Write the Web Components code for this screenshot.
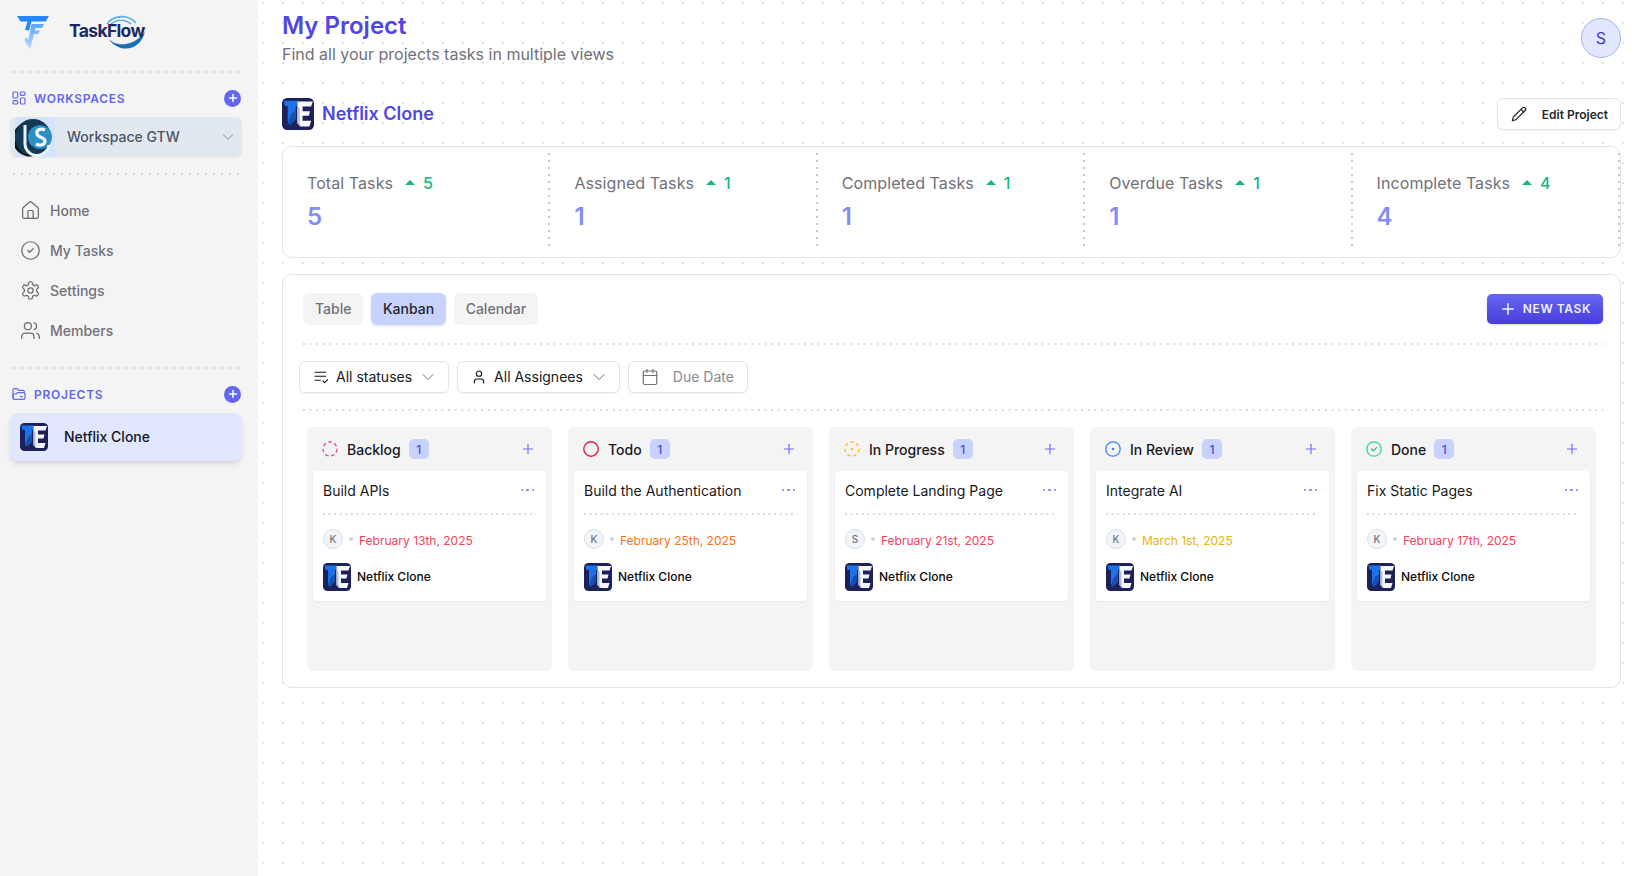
<!DOCTYPE html>
<html lang="en">
<head>
<meta charset="utf-8">
<title>TaskFlow</title>
<style>
  html, body { margin: 0; height: 100%; }
  body { font-family: Inter, "Liberation Sans", sans-serif; background: #fff; color: #111827; overflow: hidden; }
</style>
</head>
<body>
<tf-app>
  <tf-sidebar slot="side"></tf-sidebar>
  <tf-main slot="main"></tf-main>
</tf-app>

<script>
// Iconos partilhados (traço 24x24)
const ICONS = {
  home: '<path d="M15 21v-8a1 1 0 0 0-1-1h-4a1 1 0 0 0-1 1v8"/><path d="M3 10a2 2 0 0 1 .709-1.528l7-5.999a2 2 0 0 1 2.582 0l7 5.999A2 2 0 0 1 21 10v9a2 2 0 0 1-2 2H5a2 2 0 0 1-2-2z"/>',
  check: '<circle cx="12" cy="12" r="10"/><path d="m9 12 2 2 4-4"/>',
  settings: '<path d="M12.22 2h-.44a2 2 0 0 0-2 2v.18a2 2 0 0 1-1 1.73l-.43.25a2 2 0 0 1-2 0l-.15-.08a2 2 0 0 0-2.73.73l-.22.38a2 2 0 0 0 .73 2.73l.15.1a2 2 0 0 1 1 1.72v.51a2 2 0 0 1-1 1.74l-.15.09a2 2 0 0 0-.73 2.73l.22.38a2 2 0 0 0 2.73.73l.15-.08a2 2 0 0 1 2 0l.43.25a2 2 0 0 1 1 1.73V20a2 2 0 0 0 2 2h.44a2 2 0 0 0 2-2v-.18a2 2 0 0 1 1-1.73l.43-.25a2 2 0 0 1 2 0l.15.08a2 2 0 0 0 2.73-.73l.22-.39a2 2 0 0 0-.73-2.73l-.15-.08a2 2 0 0 1-1-1.74v-.5a2 2 0 0 1 1-1.74l.15-.09a2 2 0 0 0 .73-2.73l-.22-.38a2 2 0 0 0-2.73-.73l-.15.08a2 2 0 0 1-2 0l-.43-.25a2 2 0 0 1-1-1.73V4a2 2 0 0 0-2-2z"/><circle cx="12" cy="12" r="3"/>',
  users: '<path d="M16 21v-2a4 4 0 0 0-4-4H6a4 4 0 0 0-4 4v2"/><circle cx="9" cy="7" r="4"/><path d="M22 21v-2a4 4 0 0 0-3-3.87"/><path d="M16 3.13a4 4 0 0 1 0 7.75"/>',
  grid: '<rect x="3" y="3" width="7" height="9" rx="1.5"/><rect x="14" y="3" width="7" height="5" rx="1.5"/><rect x="14" y="12" width="7" height="9" rx="1.5"/><rect x="3" y="16" width="7" height="5" rx="1.5"/>',
  folder: '<path d="M3 18V6a2 2 0 0 1 2-2h4l2 2.5h7a2 2 0 0 1 2 2V10"/><path d="M3 18a2 2 0 0 0 2 2h14a2 2 0 0 0 2-2v-6a2 2 0 0 0-2-2H9.5L7.5 12H5a2 2 0 0 0-2 2z"/><path d="M14 16h3"/>',
  pencil: '<path d="M21.174 6.812a1 1 0 0 0-3.986-3.987L3.842 16.174a2 2 0 0 0-.5.83l-1.321 4.352a.5.5 0 0 0 .623.622l4.353-1.32a2 2 0 0 0 .83-.497z"/><path d="m15 5 4 4"/>',
  user: '<path d="M19 21v-2a4 4 0 0 0-4-4H9a4 4 0 0 0-4 4v2"/><circle cx="12" cy="7" r="4"/>',
  calendar: '<path d="M8 2v4"/><path d="M16 2v4"/><rect x="3" y="4" width="18" height="18" rx="2"/><path d="M3 10h18"/>',
  list: '<path d="M3 5h16"/><path d="M3 11h16"/><path d="M3 17h8"/><path d="m15 18 2.5 2.5L22 16"/>',
  chevron: '<path d="m6 9 6 6 6-6"/>',
  plus: '<path d="M5 12h14"/><path d="M12 5v14"/>'
};

function icon(name, size, width = 2) {
  return `<svg width="${size}" height="${size}" viewBox="0 0 24 24" fill="none" stroke="currentColor" stroke-width="${width}" stroke-linecap="round" stroke-linejoin="round" style="display:block;flex:none">${ICONS[name]}</svg>`;
}

class TfDivider extends HTMLElement {
  connectedCallback() {
    const gap = this.getAttribute("gap") || 8;
    this.attachShadow({ mode: "open" }).innerHTML = `
      <style>
        :host { display: block; height: 2px; background-image: linear-gradient(to right, #d9d9dc 2px, transparent 2px); background-size: ${gap}px 2px; }
      </style>`;
  }
}

// Logotipo do projecto
class TfProjectLogo extends HTMLElement {
  connectedCallback() {
    const s = this.getAttribute("size") || 28;
    this.attachShadow({ mode: "open" }).innerHTML = `
      <style>:host { display: block; flex: none; width: ${s}px; height: ${s}px; }</style>
      <svg width="${s}" height="${s}" viewBox="0 0 28 28" style="display:block">
        <rect width="28" height="28" rx="4.5" fill="#1d2159"/>
        <path d="M1.5 2.5H14L13 7H12V18L7 23L5 21V7H2.5z" fill="#1a73e8"/>
        <path d="M8 14L12 11V19L7 24L5 22z" fill="#1550b0"/>
        <path d="M13.5 3H27L25.5 7.5H18V11.5H24.5L23.5 15.5H18V20H25.5L24 25H16L13.5 22z" fill="#f6f7fb"/>
        <path d="M13.5 7L15.5 9V22L17 25H16L13.5 22z" fill="#b4bfdc"/>
      </svg>`;
  }
}

class TfSectionHead extends HTMLElement {
  connectedCallback() {
    this.attachShadow({ mode: "open" }).innerHTML = `
      <style>
        :host { display: flex; align-items: center; height: 18px; color: #6366f1; }
        .label { margin-left: 7px; font-size: 12px; font-weight: 600; letter-spacing: .72px; flex: 1; }
        .add { width: 17px; height: 17px; margin-right: 1px; border-radius: 50%; background: #6366f1; color: #fff; display: flex; align-items: center; justify-content: center; }
      </style>
      ${icon(this.getAttribute("icon"), 16, 1.8)}
      <span class="label"><slot></slot></span>
      <span class="add">${icon("plus", 12, 3)}</span>`;
  }
}

class TfNavItem extends HTMLElement {
  connectedCallback() {
    this.attachShadow({ mode: "open" }).innerHTML = `
      <style>
        :host { display: flex; align-items: center; gap: 9px; height: 40px; padding-left: 10px; font-size: 14px; font-weight: 500; color: #71717a; }
        svg { color: #6b6b70; }
      </style>
      ${icon(this.getAttribute("icon"), 21, 1.4)}
      <slot></slot>`;
  }
}

class TfSidebar extends HTMLElement {
  connectedCallback() {
    this.attachShadow({ mode: "open" }).innerHTML = `
      <style>
        :host { display: flex; flex-direction: column; width: 258px; height: 100%; box-sizing: border-box; background: #f4f4f5; padding: 15px 16px 0 10px; }
        .brand { display: flex; align-items: center; gap: 20px; height: 35px; padding-left: 7px; margin-bottom: 21px; }
        .wordmark { position: relative; width: 78px; height: 35px; }
        .wordmark span { position: absolute; left: 0; top: 6px; font-size: 17.5px; font-weight: 700; letter-spacing: -.65px; color: #1b2a63; line-height: 20px; }
        .wordmark svg { position: absolute; left: 0; top: 0; }
        tf-divider { margin-left: 3px; margin-right: 2px; }
        tf-section-head { margin-top: 16px; margin-left: 1px; }
        .workspace { display: flex; align-items: center; height: 40px; margin-top: 10px; background: #e2e8f0; border-radius: 7px; padding-left: 5px; padding-right: 5px; font-size: 14px; font-weight: 500; color: #4b5563; box-shadow: 0 1px 2px rgba(0,0,0,.05); }
        .workspace .name { margin: -2px 0 0 12px; flex: 1; }
        .workspace .chev { color: #b0b0b8; }
        .nav { margin-top: 15px; margin-bottom: 17px; }
        .project { display: flex; align-items: center; gap: 16px; height: 48px; margin-top: 10px; padding-left: 10px; background: #e0e7ff; border-radius: 8px; font-size: 14px; font-weight: 500; color: #111827; box-shadow: 0 4px 6px -1px rgba(0,0,0,.1), 0 2px 4px -2px rgba(0,0,0,.08); }
        .project span { margin-top: -2px; }
      </style>
      <div class="brand">
        <svg width="32" height="34" viewBox="0 0 32 34" style="flex:none">
          <defs>
            <linearGradient id="tf" x1="0" y1="0" x2="0" y2="1"><stop offset="0" stop-color="#3b9bff"/><stop offset="1" stop-color="#b4d2ff"/></linearGradient>
          </defs>
          <path d="M0 0h32l-3.5 5.5H14.5l-2.5 9-4-.5 2.5-8.5H3.5z" fill="#2386fb"/>
          <path d="M14.5 8H27l-2 4h-6.5l-.7 2.5H23l-2 3.5h-4l-4 15.5-5.5-9.5 1.6-3 2.2 3z" fill="url(#tf)" opacity=".85"/>
        </svg>
        <div class="wordmark">
          <svg width="78" height="35" viewBox="0 0 78 35" fill="none">
            <path d="M38 9C44 0 59 -1 67 8" stroke="#5bb5e8" stroke-width="1.8"/>
            <path d="M42 9C48 4 56 4 62 9" stroke="#2a8fd0" stroke-width="1.2"/>
            <path d="M38 22C45 32 63 33 76 17C71 36 50 40 38 22z" fill="#1a6eb5"/>
          </svg>
          <span>TaskFlow</span>
        </div>
      </div>
      <tf-divider></tf-divider>
      <tf-section-head icon="grid">WORKSPACES</tf-section-head>
      <div class="workspace">
        <svg width="40" height="40" viewBox="0 0 40 40" style="flex:none">
          <rect width="40" height="40" fill="#d3e4fb"/>
          <circle cx="18" cy="20" r="18" fill="#123a55"/>
          <path d="M6 7A18 18 0 0 0 12 37L24 37A15 15 0 0 1 6 7z" fill="#0c1620"/>
          <circle cx="25" cy="20" r="12" fill="#2b8fc4"/>
          <path d="M10 8v17a11 11 0 0 0 24 3" fill="none" stroke="#e8f2fb" stroke-width="3"/>
          <path d="M30 13c-5-2-9 0-8 4s8 3 8 7-5 5-9 3" fill="none" stroke="#f0f9ff" stroke-width="3.2"/>
        </svg>
        <span class="name">Workspace GTW</span>
        <span class="chev">${icon("chevron", 18, 1.5)}</span>
      </div>
      <tf-divider style="margin-top:16px"></tf-divider>
      <div class="nav">
        <tf-nav-item icon="home">Home</tf-nav-item>
        <tf-nav-item icon="check">My Tasks</tf-nav-item>
        <tf-nav-item icon="settings">Settings</tf-nav-item>
        <tf-nav-item icon="users">Members</tf-nav-item>
      </div>
      <tf-divider></tf-divider>
      <tf-section-head icon="folder" style="margin-top:16px">PROJECTS</tf-section-head>
      <div class="project"><tf-project-logo size="28"></tf-project-logo><span>Netflix Clone</span></div>`;
  }
}

class TfStat extends HTMLElement {
  connectedCallback() {
    const value = this.getAttribute("value");
    this.attachShadow({ mode: "open" }).innerHTML = `
      <style>
        :host { display: block; box-sizing: border-box; padding: 20px 24px 0; height: 98px; background-image: linear-gradient(to bottom, #c9c9cd 2px, transparent 2px); background-size: 2px 7px; background-repeat: repeat-y; background-position: right top; }
        .top { display: flex; align-items: center; height: 19px; font-size: 16px; letter-spacing: .08px; color: #71717a; }
        .tri { width: 0; height: 0; margin-left: 12px; margin-right: 8px; border-left: 5px solid transparent; border-right: 5px solid transparent; border-bottom: 5px solid #10b981; }
        .delta { color: #10b981; font-weight: 500; }
        .num { margin-top: 10px; font-size: 24px; line-height: 29px; font-weight: 600; color: #818cf8; }
      </style>
      <div class="top"><slot></slot><span class="tri"></span><span class="delta">${value}</span></div>
      <div class="num">${value}</div>`;
  }
}

class TfTab extends HTMLElement {
  connectedCallback() {
    this.attachShadow({ mode: "open" }).innerHTML = `
      <style>
        :host { display: flex; align-items: center; height: 32px; box-sizing: border-box; padding: 0 11.5px 2px 12px; border-radius: 6px; background: #f4f4f5; color: #71717a; font-size: 14px; font-weight: 500; }
        :host([active]) { background: #c7d2fe; color: #27272a; box-shadow: 0 1px 3px rgba(0,0,0,.12); }
      </style>
      <slot></slot>`;
  }
}

class TfFilter extends HTMLElement {
  connectedCallback() {
    const muted = this.hasAttribute("muted");
    this.attachShadow({ mode: "open" }).innerHTML = `
      <style>
        :host { display: flex; align-items: center; height: 32px; box-sizing: border-box; padding: 0 ${muted ? 13 : 10}px 0 ${muted ? 12 : 13}px; background: #fff; border: 1px solid #e4e4e7; border-radius: 6px; font-size: 14px; font-weight: 400; color: ${muted ? "#8a8a90" : "#18181b"}; box-shadow: 0 1px 2px rgba(0,0,0,.05); }
        .text { margin: -2px 0 0 ${muted ? 14 : 7}px; }
        .chev { margin-left: 6px; color: #71717a; }
        .lead { color: ${muted ? "#71717a" : "#18181b"}; }
      </style>
      <span class="lead">${icon(this.getAttribute("icon"), muted ? 18 : 16, 1.6)}</span>
      <span class="text"><slot></slot></span>
      ${muted ? "" : `<span class="chev">${icon("chevron", 20, 1.2)}</span>`}`;
  }
}

class TfStatusIcon extends HTMLElement {
  connectedCallback() {
    const kind = this.getAttribute("kind");
    const shapes = {
      backlog: '<circle cx="8" cy="8" r="7" stroke="#ec4899" stroke-width="1.3" stroke-dasharray="3.6 2.6" fill="none"/>',
      todo: '<circle cx="8" cy="8" r="7.2" stroke="#e11d48" stroke-width="1.4" fill="none"/>',
      progress: '<circle cx="8" cy="8" r="7" stroke="#fbbf24" stroke-width="1.3" stroke-dasharray="3.6 2.6" fill="none"/><circle cx="8" cy="8" r="1.2" fill="#fbbf24"/>',
      review: '<circle cx="8" cy="8" r="7.2" stroke="#3b82f6" stroke-width="1.3" fill="none"/><circle cx="8" cy="8" r="1.3" fill="#3b82f6"/>',
      done: '<circle cx="8" cy="8" r="7.2" stroke="#34d399" stroke-width="1.3" fill="none"/><path d="m5.6 8 1.8 1.8 3.2-3.2" stroke="#10b981" stroke-width="1.2" fill="none" stroke-linecap="round" stroke-linejoin="round"/>'
    };
    this.attachShadow({ mode: "open" }).innerHTML = `
      <style>:host { display: block; flex: none; width: 16px; height: 16px; }</style>
      <svg width="16" height="16" viewBox="0 0 16 16" style="display:block">${shapes[kind]}</svg>`;
  }
}

class TfTaskCard extends HTMLElement {
  connectedCallback() {
    this.attachShadow({ mode: "open" }).innerHTML = `
      <style>
        :host { display: block; box-sizing: border-box; height: 130px; padding: 9px 10px 0; background: #fff; border-radius: 4px; box-shadow: 0 1px 2px rgba(0,0,0,.05); }
        .head { display: flex; align-items: center; justify-content: space-between; height: 20px; font-size: 14px; font-weight: 400; color: #18181b; }
        .dots { display: flex; gap: 3px; margin-right: 2px; }
        .dots i { width: 2.4px; height: 2.4px; border-radius: 50%; background: #7f7ff5; }
        tf-divider { margin-top: 13px; }
        .meta { display: flex; align-items: center; margin-top: 14px; height: 20px; font-size: 12px; color: ${this.getAttribute("color")}; }
        .meta .date { margin-top: 2px; }
        .avatar { width: 18px; height: 18px; border-radius: 50%; border: 1px solid #d8dee9; background: #f1f5f9; color: #71717a; font-size: 10px; font-weight: 500; display: flex; align-items: center; justify-content: center; }
        .sep { width: 4px; height: 4px; border-radius: 50%; background: #d1d1d6; margin: 0 6px; }
        .project { display: flex; align-items: center; gap: 6px; margin-top: 14px; font-size: 12px; font-weight: 500; color: #09090b; }
        .project span { margin-top: -2px; }
      </style>
      <div class="head"><span><slot></slot></span><span class="dots"><i></i><i></i><i></i></span></div>
      <tf-divider gap="5.6"></tf-divider>
      <div class="meta"><span class="avatar">${this.getAttribute("who")}</span><span class="sep"></span><span class="date">${this.getAttribute("date")}</span></div>
      <div class="project"><tf-project-logo size="28"></tf-project-logo><span>Netflix Clone</span></div>`;
  }
}

class TfColumn extends HTMLElement {
  connectedCallback() {
    this.attachShadow({ mode: "open" }).innerHTML = `
      <style>
        :host { display: block; box-sizing: border-box; height: 244px; padding: 0 6px; background: #f4f4f5; border-radius: 6px; }
        .head { display: flex; align-items: center; height: 44px; padding: 0 10px 0 9px; font-size: 14px; font-weight: 500; color: #18181b; }
        .title { margin-left: 9px; }
        .count { width: 20px; height: 20px; margin-left: 8px; border-radius: 5px; background: #c7d2fe; color: #4f46e5; font-size: 12px; font-weight: 500; display: flex; align-items: center; justify-content: center; }
        .add { margin-left: auto; color: #6f6ef0; }
      </style>
      <div class="head">
        <tf-status-icon kind="${this.getAttribute("kind")}"></tf-status-icon>
        <span class="title">${this.getAttribute("title")}</span>
        <span class="count">1</span>
        <span class="add">${icon("plus", 16, 1.7)}</span>
      </div>
      <slot></slot>`;
  }
}

class TfMain extends HTMLElement {
  connectedCallback() {
    this.attachShadow({ mode: "open" }).innerHTML = `
      <style>
        :host { display: block; height: 100%; box-sizing: border-box; padding: 12px 16px 0 24px; background-color: #fff; background-image: radial-gradient(circle, #e2e2e6 1px, transparent 1.2px); background-size: 20px 20px; background-position: 15px -7px; }
        .top { display: flex; justify-content: space-between; align-items: flex-start; height: 86px; }
        h1 { margin: 0; font-size: 24px; line-height: 28px; font-weight: 600; color: #4f46e5; }
        p { margin: 2px 0 0; font-size: 16px; line-height: 24px; color: #71717a; }
        .me { width: 40px; height: 40px; margin-top: 6px; box-sizing: border-box; border-radius: 50%; background: #e0e7ff; border: 1px solid #a5b4fc; color: #4338ca; font-size: 16px; display: flex; align-items: center; justify-content: center; }
        .project { display: flex; align-items: center; justify-content: space-between; height: 32px; }
        .project .left { display: flex; align-items: center; gap: 8px; font-size: 18px; font-weight: 600; color: #4f46e5; }
        .project .left span { margin-top: -2px; }
        .edit { display: flex; align-items: center; gap: 15px; height: 32px; box-sizing: border-box; padding: 0 12px 0 13px; background: #fff; border: 1px solid #e4e4e7; border-radius: 6px; font-size: 12px; font-weight: 600; color: #27272a; box-shadow: 0 1px 2px rgba(0,0,0,.05); }
        .stats { display: grid; grid-template-columns: repeat(5, 1fr); margin-top: 16px; height: 112px; box-sizing: border-box; padding: 6px 0; background: #fff; border: 1px solid #e4e4e7; border-radius: 10px; }
        .board { margin-top: 16px; height: 414px; box-sizing: border-box; padding: 18px 17px 0 20px; background: #fff; border: 1px solid #e4e4e7; border-radius: 10px; }
        .bar { display: flex; align-items: center; justify-content: space-between; height: 32px; }
        .tabs { display: flex; gap: 8px; }
        .new { display: flex; align-items: center; gap: 6px; height: 30px; box-sizing: border-box; padding: 0 12px 2px 12px; border-radius: 5px; background: linear-gradient(#6466f1, #4a3ddb); color: #eef0ff; font-size: 12px; font-weight: 600; letter-spacing: .6px; box-shadow: 0 1px 2px rgba(0,0,0,.15); }
        .new svg { margin-top: 2px; }
        .filters { display: flex; gap: 8px; margin: 16px 0 16px -4px; }
        .cols { display: grid; grid-template-columns: repeat(5, 245px); gap: 16px; margin: 16px 0 0 4px; }
      </style>
      <div class="top">
        <div><h1>My Project</h1><p>Find all your projects tasks in multiple views</p></div>
        <div class="me">S</div>
      </div>
      <div class="project">
        <div class="left"><tf-project-logo size="32"></tf-project-logo><span>Netflix Clone</span></div>
        <div class="edit">${icon("pencil", 16, 1.8)}<span>Edit Project</span></div>
      </div>
      <div class="stats">
        <tf-stat value="5">Total Tasks</tf-stat>
        <tf-stat value="1">Assigned Tasks</tf-stat>
        <tf-stat value="1">Completed Tasks</tf-stat>
        <tf-stat value="1">Overdue Tasks</tf-stat>
        <tf-stat value="4">Incomplete Tasks</tf-stat>
      </div>
      <div class="board">
        <div class="bar">
          <div class="tabs"><tf-tab>Table</tf-tab><tf-tab active>Kanban</tf-tab><tf-tab>Calendar</tf-tab></div>
          <div class="new">${icon("plus", 18, 2)}<span>NEW TASK</span></div>
        </div>
        <tf-divider gap="6.6" style="margin-top:18px"></tf-divider>
        <div class="filters">
          <tf-filter icon="list">All statuses</tf-filter>
          <tf-filter icon="user">All Assignees</tf-filter>
          <tf-filter icon="calendar" muted>Due Date</tf-filter>
        </div>
        <tf-divider gap="6.6"></tf-divider>
        <div class="cols">
          <tf-column kind="backlog" title="Backlog"><tf-task-card who="K" date="February 13th, 2025" color="#f43f5e">Build APIs</tf-task-card></tf-column>
          <tf-column kind="todo" title="Todo"><tf-task-card who="K" date="February 25th, 2025" color="#f97316">Build the Authentication</tf-task-card></tf-column>
          <tf-column kind="progress" title="In Progress"><tf-task-card who="S" date="February 21st, 2025" color="#f43f5e">Complete Landing Page</tf-task-card></tf-column>
          <tf-column kind="review" title="In Review"><tf-task-card who="K" date="March 1st, 2025" color="#eab308">Integrate AI</tf-task-card></tf-column>
          <tf-column kind="done" title="Done"><tf-task-card who="K" date="February 17th, 2025" color="#f43f5e">Fix Static Pages</tf-task-card></tf-column>
        </div>
      </div>`;
  }
}

class TfApp extends HTMLElement {
  constructor() {
    super();
    this.attachShadow({ mode: "open" }).innerHTML = `
      <style>
        :host { display: grid; grid-template-columns: 258px 1fr; height: 876px; }
      </style>
      <slot name="side"></slot>
      <slot name="main"></slot>`;
  }
}

// Filhos primeiro, depois os contentores
customElements.define("tf-divider", TfDivider);
customElements.define("tf-project-logo", TfProjectLogo);
customElements.define("tf-section-head", TfSectionHead);
customElements.define("tf-nav-item", TfNavItem);
customElements.define("tf-stat", TfStat);
customElements.define("tf-tab", TfTab);
customElements.define("tf-filter", TfFilter);
customElements.define("tf-status-icon", TfStatusIcon);
customElements.define("tf-task-card", TfTaskCard);
customElements.define("tf-column", TfColumn);
customElements.define("tf-sidebar", TfSidebar);
customElements.define("tf-main", TfMain);
customElements.define("tf-app", TfApp);
</script>
</body>
</html>
